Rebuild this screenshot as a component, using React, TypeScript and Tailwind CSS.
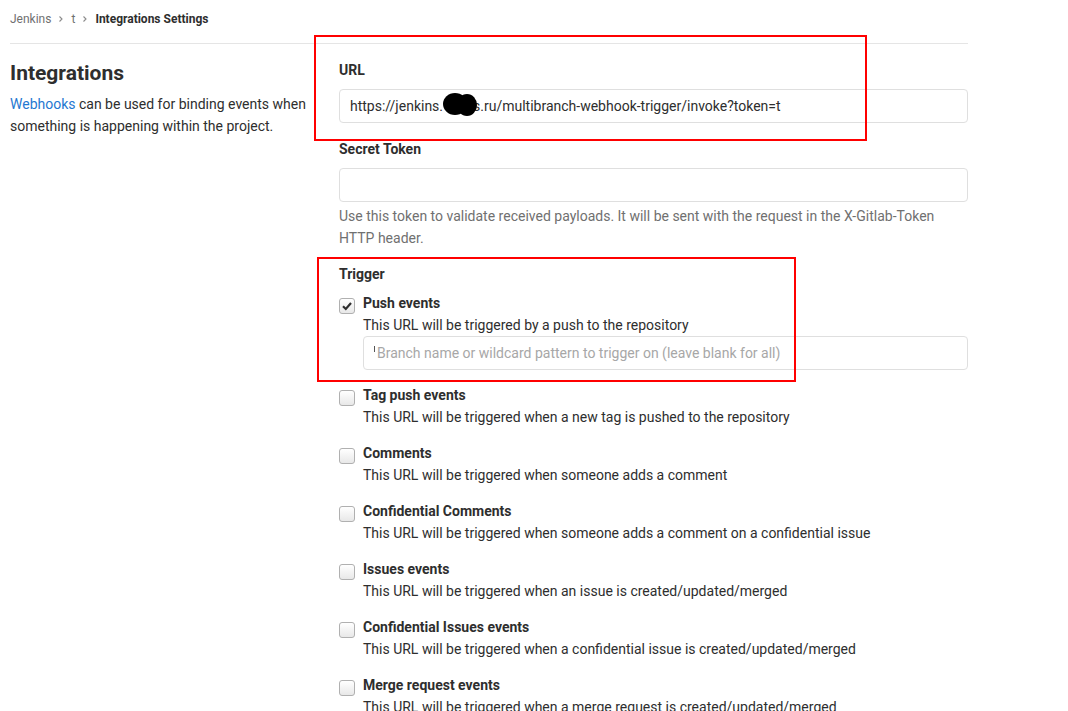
import React from "react";

const items = [
  { title: "Push events", desc: "This URL will be triggered by a push to the repository", checked: true, input: true },
  { title: "Tag push events", desc: "This URL will be triggered when a new tag is pushed to the repository" },
  { title: "Comments", desc: "This URL will be triggered when someone adds a comment" },
  { title: "Confidential Comments", desc: "This URL will be triggered when someone adds a comment on a confidential issue" },
  { title: "Issues events", desc: "This URL will be triggered when an issue is created/updated/merged" },
  { title: "Confidential Issues events", desc: "This URL will be triggered when a confidential issue is created/updated/merged" },
  { title: "Merge request events", desc: "This URL will be triggered when a merge request is created/updated/merged" },
];

function Chevron() {
  return (
    <svg width="8" height="8" viewBox="0 0 8 8" className="mx-[6px]">
      <path d="M2.5 1.5 L5 4 L2.5 6.5" fill="none" stroke="#8c8c8c" strokeWidth="1.1" />
    </svg>
  );
}

function Checkbox({ checked }: { checked?: boolean }) {
  return (
    <div className="w-[16px] h-[16px] mt-[6px] shrink-0 rounded-[3px] border border-[#b0b0b0] bg-gradient-to-b from-[#ffffff] to-[#e8e8e8] flex items-center justify-center">
      {checked && (
        <svg width="12" height="12" viewBox="0 0 12 12">
          <path d="M2 6.3 L4.8 9 L10 3" fill="none" stroke="#2e2e2e" strokeWidth="2.2" />
        </svg>
      )}
    </div>
  );
}

export default function App() {
  return (
    <div className="relative w-[1068px] h-[711px] overflow-hidden bg-white text-[#2e2e2e]" style={{ fontFamily: "Roboto, 'Liberation Sans', sans-serif" }}>
      <div className="px-[10px] w-[978px]">
        <div className="h-[44px] border-b border-[#e5e5e5] flex items-center pb-[5px] text-[12px]">
          <span className="text-[#707070]">Jenkins</span>
          <Chevron />
          <span className="text-[#707070]">t</span>
          <Chevron />
          <span className="font-bold text-[#2e2e2e]">Integrations Settings</span>
        </div>
        <div className="flex">
          <div className="w-[329px] shrink-0 pt-[17px]">
            <h2 className="text-[21px] leading-[24px] font-bold">Integrations</h2>
            <p className="mt-[8px] text-[14px] leading-[22px] w-[300px]">
              <span className="text-[#1f78d1]">Webhooks</span> can be used for binding events when something is happening within the project.
            </p>
          </div>
          <div className="flex-1 pt-[16px] text-[14px]">
            <div className="font-bold leading-[20px]">URL</div>
            <div className="mt-[9px] h-[34px] border border-[#dfdfdf] rounded-[4px] flex items-center px-[10px] whitespace-nowrap">
              https://jenkins.
              <span className="relative inline-block w-[30px] h-[10px]">
                <svg className="absolute left-[0px] top-[-9px]" width="36" height="25" viewBox="0 0 36 25">
                  <ellipse cx="12" cy="12" rx="12" ry="11" fill="#000" />
                  <ellipse cx="24" cy="13" rx="10" ry="11" fill="#000" />
                </svg>
              </span>
              s.ru/multibranch-webhook-trigger/invoke?token=t
            </div>
            <div className="mt-[16px] font-bold leading-[20px]">Secret Token</div>
            <div className="mt-[9px] h-[34px] border border-[#dfdfdf] rounded-[4px]" />
            <p className="mt-[3px] leading-[22px] text-[#707070]">
              Use this token to validate received payloads. It will be sent with the request in the X-Gitlab-Token HTTP header.
            </p>
            <div className="mt-[15px] font-bold leading-[20px]">Trigger</div>
            <div className="mt-[8px] flex flex-col gap-[14px]">
              {items.map((it) => (
                <div key={it.title} className="flex gap-[8px]">
                  <Checkbox checked={it.checked} />
                  <div className="flex-1">
                    <div className="font-bold leading-[22px]">{it.title}</div>
                    <div className="leading-[22px]">{it.desc}</div>
                    {it.input && (
                      <div className="h-[34px] border border-[#dfdfdf] rounded-[4px] flex items-center px-[10px] text-[#a7a7a7] whitespace-nowrap">
                        <span className="inline-block w-px h-[6px] bg-[#555] self-start mt-[9px] mr-[2px]" />
                        Branch name or wildcard pattern to trigger on (leave blank for all)
                      </div>
                    )}
                  </div>
                </div>
              ))}
            </div>
          </div>
        </div>
      </div>
      <div className="absolute left-[314px] top-[35px] w-[553px] h-[106px] border-2 border-[#ff0000]" />
      <div className="absolute left-[317px] top-[257px] w-[479px] h-[125px] border-2 border-[#ff0000]" />
    </div>
  );
}
